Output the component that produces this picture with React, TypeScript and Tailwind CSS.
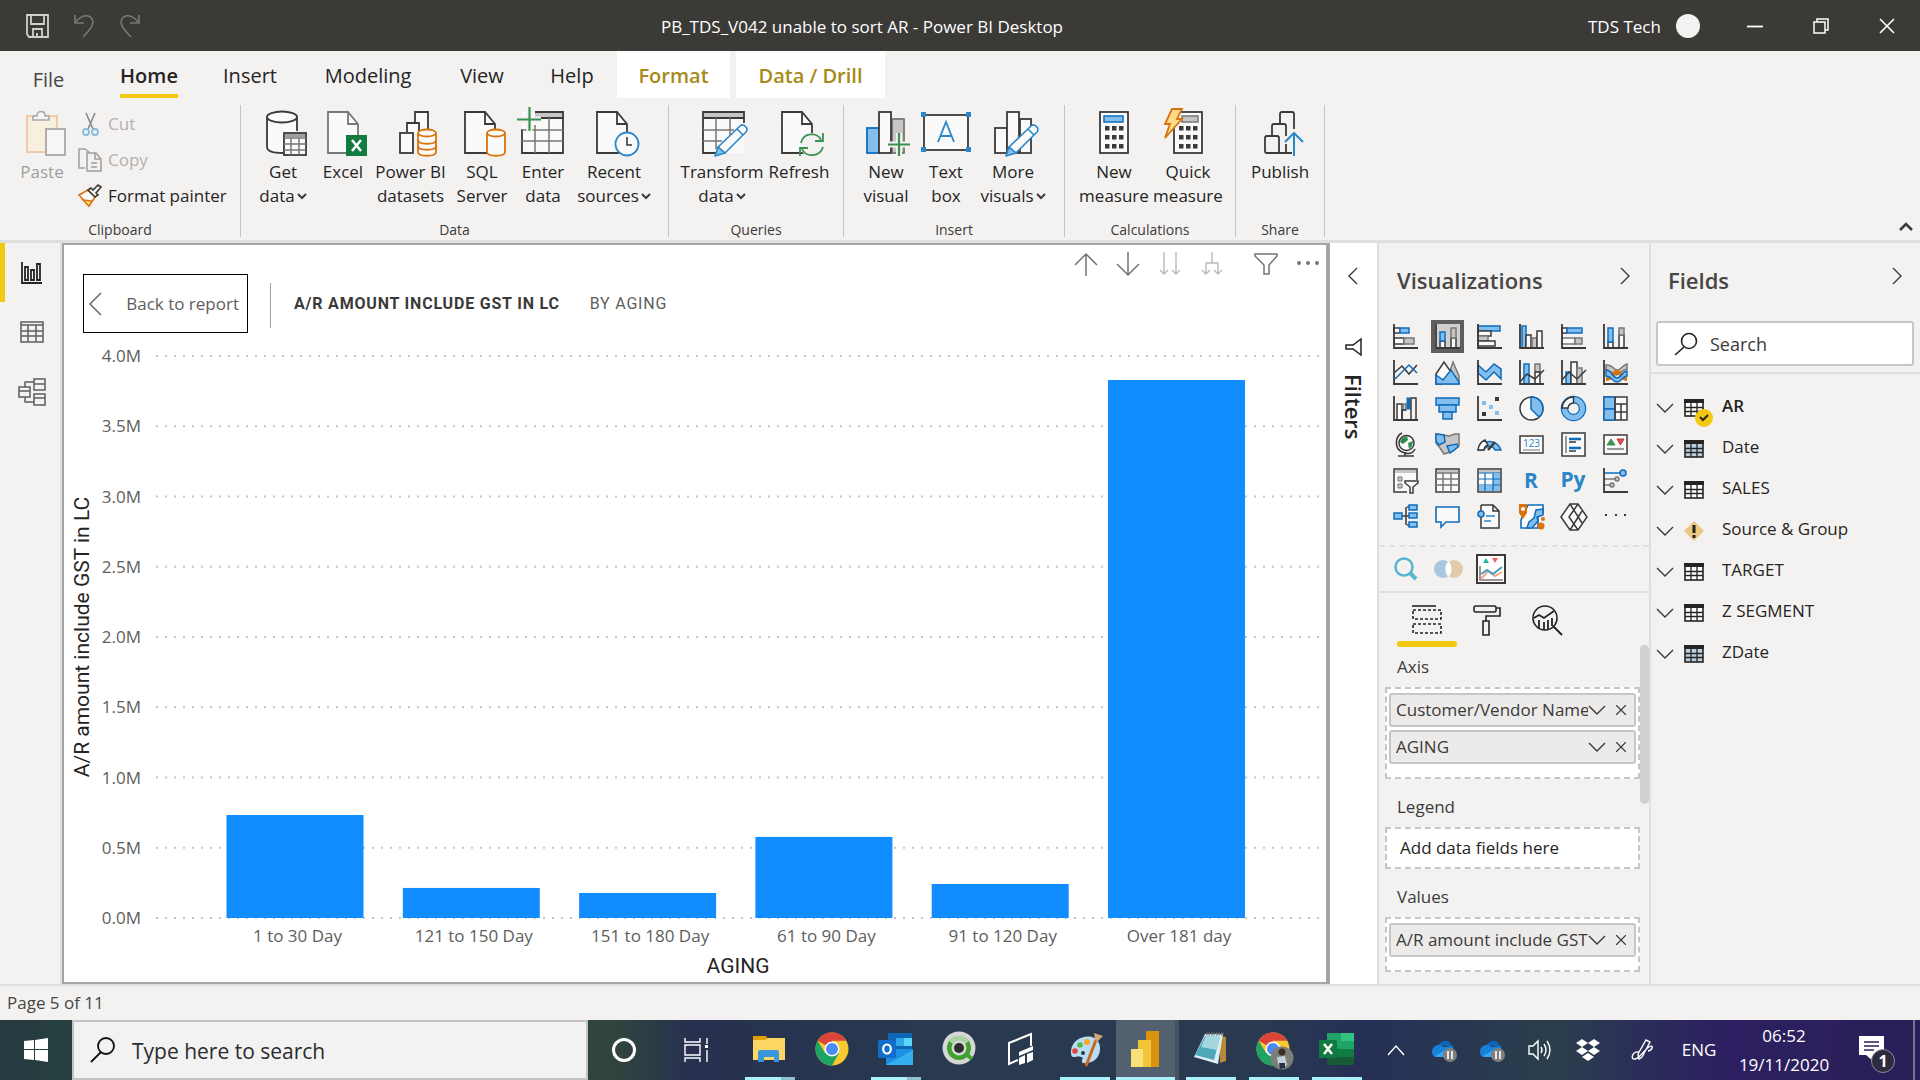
import { ReactNode, useState } from 'react';
import { X } from 'lucide-react';

const D = '#3b3a39';
const B = '#0f6cbd';
const LB = '#83beec';
const G = '#c8c6c4';
const GS = '#797775';
const W = '#fafafa';
const O = '#d9730d';

const tabs = [
  { label: 'File', box: 'w-[97px] text-[#484644]', text: 'pt-2.5' },
  { label: 'Home', box: 'w-[104px]', text: 'pt-1.5' },
  { label: 'Insert', box: 'w-[98px]', text: 'pt-1.5' },
  { label: 'Modeling', box: 'w-[138px]', text: 'pt-1.5' },
  { label: 'View', box: 'w-[90px]', text: 'pt-1.5' },
  { label: 'Help', box: 'w-[90px]', text: 'pt-1.5' },
];

const bars = [
  { label: '1 to 30 Day', value: 0.733 },
  { label: '121 to 150 Day', value: 0.214 },
  { label: '151 to 180 Day', value: 0.178 },
  { label: '61 to 90 Day', value: 0.577 },
  { label: '91 to 120 Day', value: 0.242 },
  { label: 'Over 181 day', value: 3.829 },
];

const ticks = ['4.0M', '3.5M', '3.0M', '2.5M', '2.0M', '1.5M', '1.0M', '0.5M', '0.0M'];

const fields = [
  { name: 'AR', kind: 'checked' },
  { name: 'Date', kind: 'date' },
  { name: 'SALES', kind: 'table' },
  { name: 'Source & Group', kind: 'warning' },
  { name: 'TARGET', kind: 'table' },
  { name: 'Z SEGMENT', kind: 'table' },
  { name: 'ZDate', kind: 'date' },
];

function Svg({ w, h, children }: { w: number; h: number; children: ReactNode }) {
  return (
    <svg width={w} height={h} viewBox={`0 0 ${w} ${h}`} fill="none" className="shrink-0 overflow-visible" aria-hidden="true">
      {children}
    </svg>
  );
}

function Chevron({ dir, w = 18, h = 10, color = D }: { dir: 'up' | 'down' | 'left' | 'right'; w?: number; h?: number; color?: string }) {
  const d = {
    up: `M1 ${h - 1}L${w / 2} 1L${w - 1} ${h - 1}`,
    down: `M1 1L${w / 2} ${h - 1}L${w - 1} 1`,
    left: `M${w - 1} 1L1 ${h / 2}L${w - 1} ${h - 1}`,
    right: `M1 1L${w - 1} ${h / 2}L1 ${h - 1}`,
  }[dir];
  return (
    <Svg w={w} h={h}>
      <path d={d} stroke={color} strokeWidth="1.4" />
    </Svg>
  );
}

/* ---------- Ribbon drawings, 48 x 48 ---------- */

const Page = ({ x = 7, color = D }: { x?: number; color?: string }) => (
  <path d={`M${x + 30} 26V15L${x + 20} 3H${x}V44H${x + 22}M${x + 20} 3V15H${x + 30}`} stroke={color} strokeWidth="1.8" fill={W} />
);

const Cylinder = ({ x, rings }: { x: number; rings?: boolean }) => (
  <g stroke={O} strokeWidth="1.8" fill={W}>
    <path d={`M${x} 24V43C${x} 48 ${x + 18} 48 ${x + 18} 43V24`} />
    <ellipse cx={x + 9} cy="24" rx="9" ry="3.5" />
    {rings && <path d={`M${x} 31C${x} 36 ${x + 18} 36 ${x + 18} 31M${x} 37C${x} 42 ${x + 18} 42 ${x + 18} 37`} fill="none" />}
  </g>
);

const Pencil = () => (
  <g stroke="#2a87c8" strokeWidth="1.6" strokeLinejoin="round">
    <path d="M20 38L42 17C45 14 51 19 48 23L27 44Z" fill={W} />
    <path d="M20 38L17 47L27 44Z" fill={LB} />
    <path d="M39 20L45 26" />
  </g>
);

const Calc = ({ x }: { x: number }) => (
  <g>
    <rect x={x} y="3" width="28" height="41" fill={W} stroke={D} strokeWidth="1.8" />
    {[17, 26, 35].map((y) =>
      [5, 12, 19].map((dx) => <rect key={`${y}-${dx}`} x={x + dx} y={y} width="4.5" height="4.5" fill={D} />)
    )}
  </g>
);

const ribbonIcons: Record<string, ReactNode> = {
  paste: (
    <g opacity="0.6">
      <rect x="9" y="7" width="30" height="36" fill="#fcefd2" stroke="#f0b27a" strokeWidth="2" />
      <path d="M15 11V7H19C19 1 27 1 27 7H31V11Z" fill={W} stroke={GS} strokeWidth="1.6" />
      <rect x="28" y="20" width="19" height="26" fill={W} stroke={GS} strokeWidth="1.8" />
    </g>
  ),
  getData: (
    <>
      <path d="M8 8V38C8 42 15 44 24 44V24H38V8Z" fill={W} />
      <path d="M8 8V38C8 42 15 44 24 44M38 8V22" stroke={D} strokeWidth="1.8" />
      <ellipse cx="23" cy="8" rx="15" ry="5.5" fill={W} stroke={D} strokeWidth="1.8" />
      <rect x="25" y="24" width="22" height="22" fill={W} stroke={D} strokeWidth="1.8" />
      <path d="M26 25H46V28H26Z" fill="#a19f9d" />
      <path d="M25 29H47M25 35H47M25 41H47M32 29V46M40 29V46" stroke={GS} strokeWidth="1.5" />
    </>
  ),
  excel: (
    <>
      <Page x={9} color={GS} />
      <rect x="27" y="26" width="21" height="21" fill="#107c41" />
      <path d="M33 31L42 42M42 31L33 42" stroke="#fff" strokeWidth="2.5" />
    </>
  ),
  pbi: (
    <>
      <g stroke={D} strokeWidth="1.8" fill={W}>
        <path d="M28 14V3H41V20" />
        <path d="M20 23V14H32V24" />
        <rect x="13" y="24" width="13" height="20" />
      </g>
      <Cylinder x={31} rings />
    </>
  ),
  sql: (
    <>
      <Page />
      <Cylinder x={29} />
    </>
  ),
  enter: (
    <>
      <rect x="3" y="3" width="41" height="41" fill={W} />
      <path d="M16 3H44V8H16Z" fill={G} />
      <path d="M3 20V44H44V3H16M22 9H44" stroke={D} strokeWidth="1.8" />
      <path d="M3 21H44M3 32H44M16 16V44M30 9V44" stroke={GS} strokeWidth="1.5" />
      <path d="M-2 10.5H22M10.5 -2V22" stroke="#f3f2f1" strokeWidth="6" />
      <path d="M-2 10.5H22M10.5 -2V22" stroke="#3a9150" strokeWidth="2.2" />
    </>
  ),
  recent: (
    <>
      <Page />
      <circle cx="37" cy="35" r="11.5" fill={W} stroke="#2a87c8" strokeWidth="1.8" />
      <path d="M37 28V36H42" stroke={D} strokeWidth="1.6" />
    </>
  ),
  transform: (
    <>
      <rect x="5" y="3" width="41" height="41" fill={W} />
      <path d="M5 3H46V9H5Z" fill={G} />
      <path d="M46 14V3H5V44H18M5 9H46" stroke={D} strokeWidth="1.8" />
      <path d="M5 21H36M5 32H24M18 9V40M32 9V26" stroke={GS} strokeWidth="1.5" />
      <Pencil />
    </>
  ),
  refresh: (
    <>
      <Page />
      <circle cx="37" cy="36" r="12" fill="#f3f2f1" />
      <path d="M26 34C28 23 43 23 46 31M48 24V32H40M48 38C45 48 31 49 27 40M25 47V39H33" stroke="#3a9150" strokeWidth="1.8" />
    </>
  ),
  newVisual: (
    <>
      <rect x="30" y="10" width="12" height="34" fill={G} stroke={GS} strokeWidth="1.8" />
      <rect x="5" y="19" width="12" height="25" fill={LB} stroke={B} strokeWidth="1.8" />
      <rect x="17" y="3" width="12" height="41" fill={W} stroke={D} strokeWidth="1.8" />
      <path d="M26 35.5H48M37 24V47" stroke="#f3f2f1" strokeWidth="6" />
      <path d="M26 35.5H48M37 24V47" stroke="#3a9150" strokeWidth="2.2" />
    </>
  ),
  textBox: (
    <>
      <rect x="2" y="6" width="44" height="35" fill={W} stroke={D} strokeWidth="1.8" />
      <path d="M-1 3h5v5h-5zM44 3h5v5h-5zM-1 38h5v5h-5zM44 38h5v5h-5z" fill="#2a87c8" />
      <path d="M16 33L24 13L32 33M19 27H29" stroke="#2a87c8" strokeWidth="1.8" />
    </>
  ),
  moreVisuals: (
    <>
      <g stroke={D} strokeWidth="1.8" fill={W}>
        <rect x="6" y="19" width="12" height="25" />
        <rect x="31" y="10" width="11" height="34" />
        <rect x="18" y="3" width="12" height="41" />
      </g>
      <Pencil />
    </>
  ),
  newMeasure: (
    <>
      <Calc x={10} />
      <rect x="14" y="7" width="19" height="6" fill={LB} stroke={B} strokeWidth="1.5" />
    </>
  ),
  quickMeasure: (
    <>
      <Calc x={10} />
      <rect x="18" y="7" width="16" height="6" fill={G} stroke={GS} strokeWidth="1.5" />
      <path d="M8 0H18L13 10H18L1 29L6 15H1Z" fill="#fdd98b" stroke={O} strokeWidth="1.8" />
    </>
  ),
  publish: (
    <>
      <g stroke={D} strokeWidth="1.8">
        <path d="M24 14V5Q24 3 26 3H36Q38 3 38 5V20" />
        <path d="M16 26V17Q16 15 18 15H28Q30 15 30 17V27M30 35V43" />
        <path d="M36 44H11Q9 44 9 42V29Q9 27 11 27H21Q23 27 23 29V44" />
      </g>
      <path d="M38 47V25M29 33L38 24L47 33" stroke="#2a87c8" strokeWidth="2" />
    </>
  ),
};

function RibbonButton({ icon, lines, box, menu, muted }: { icon: string; lines: string[]; box: string; menu?: boolean; muted?: boolean }) {
  return (
    <button className={`flex shrink-0 flex-col items-center whitespace-nowrap pt-1 text-[17px] leading-6 ${muted ? 'text-[#a19f9d]' : 'text-[#252423]'} ${box}`}>
      <Svg w={48} h={48}>{ribbonIcons[icon]}</Svg>
      <span className="pt-[3px]">{lines[0]}</span>
      {lines[1] && (
        <span className="flex items-center gap-0.5">
          {lines[1]}
          {menu && (
            <Svg w={10} h={6}>
              <path d="M1 1L5 5L9 1" stroke={D} strokeWidth="2" />
            </Svg>
          )}
        </span>
      )}
    </button>
  );
}

function RibbonGroup({ label, box, children }: { label: string; box: string; children: ReactNode }) {
  return (
    <section className={`flex h-[132px] shrink-0 flex-col justify-between border-r border-[#c8c6c4] ${box}`}>
      <div className="flex">{children}</div>
      <p className="text-center text-[14px] leading-[14px] text-[#3b3a39]">{label}</p>
    </section>
  );
}

/* ---------- Visual type gallery, 25 x 25 ---------- */

const Axes = () => <path d="M1 0V24H25" stroke={D} strokeWidth="1.8" />;
const blue = { fill: LB, stroke: B, strokeWidth: 1.5 };
const gray = { fill: G, stroke: GS, strokeWidth: 1.5 };
const dark = { fill: W, stroke: D, strokeWidth: 1.5 };

const visuals: { name: string; art: ReactNode }[] = [
  { name: 'Stacked bar chart', art: <><rect x="1" y="4" width="6" height="5" {...dark} /><rect x="7" y="4" width="9" height="5" {...blue} /><rect x="1" y="14" width="10" height="6" {...dark} /><rect x="11" y="14" width="10" height="6" {...gray} /><Axes /></> },
  { name: 'Stacked column chart', art: <><rect x="5" y="17" width="5" height="7" {...dark} /><rect x="5" y="8" width="5" height="9" {...blue} /><rect x="16" y="14" width="5" height="10" {...dark} /><rect x="16" y="4" width="5" height="10" {...gray} /><Axes /></> },
  { name: 'Clustered bar chart', art: <><rect x="1" y="2" width="22" height="5" {...blue} /><rect x="1" y="7" width="13" height="5" {...dark} /><rect x="1" y="12" width="10" height="5" {...gray} /><rect x="1" y="17" width="17" height="5" {...dark} /><Axes /></> },
  { name: 'Clustered column chart', art: <><rect x="3" y="2" width="4" height="22" {...blue} /><rect x="7" y="11" width="5" height="13" {...dark} /><rect x="13" y="14" width="5" height="10" {...gray} /><rect x="18" y="7" width="5" height="17" {...dark} /><Axes /></> },
  { name: '100% stacked bar chart', art: <><rect x="1" y="4" width="5" height="5" {...dark} /><rect x="6" y="4" width="15" height="5" {...blue} /><rect x="1" y="14" width="13" height="6" fill={W} stroke={GS} strokeWidth="1.5" /><rect x="14" y="14" width="7" height="6" {...gray} /><Axes /></> },
  { name: '100% stacked column chart', art: <><rect x="5" y="18" width="5" height="6" {...dark} /><rect x="5" y="4" width="5" height="14" {...blue} /><rect x="16" y="11" width="5" height="13" {...dark} /><rect x="16" y="4" width="5" height="7" {...gray} /><Axes /></> },
  { name: 'Line chart', art: <><path d="M1 13L9 6L16 14L24 5" stroke={D} strokeWidth="1.5" /><path d="M2 19L16 5L24 13" stroke={B} strokeWidth="1.5" /><Axes /></> },
  { name: 'Area chart', art: <><path d="M11 23L18 2L24 16V24H11Z" {...gray} /><path d="M1 14L9 2L16 12L8 24H1Z" {...dark} /><path d="M1 24V15L8 20L16 10L24 22V24Z" {...blue} /></> },
  { name: 'Stacked area chart', art: <><path d="M1 5L9 12L17 4L24 9V19L17 12L9 20L1 13Z" {...blue} /><Axes /></> },
  { name: 'Line and stacked column chart', art: <><rect x="5" y="4" width="5" height="20" {...blue} /><rect x="16" y="4" width="5" height="8" {...gray} /><rect x="16" y="12" width="5" height="12" {...dark} /><path d="M1 22L8 14L16 19L25 10" stroke={D} strokeWidth="1.5" /><Axes /></> },
  { name: 'Line and clustered column chart', art: <><rect x="5" y="12" width="5" height="12" {...blue} /><rect x="10" y="2" width="6" height="22" {...dark} /><rect x="16" y="8" width="5" height="16" {...gray} /><path d="M1 20L8 12L16 19L25 10" stroke={D} strokeWidth="1.5" /><Axes /></> },
  { name: 'Ribbon chart', art: <><path d="M3 5C10 4 10 10 14 10S20 5 24 4V9C18 10 18 15 13 15S8 9 3 10Z" {...gray} /><path d="M3 19C9 19 9 12 14 12S19 19 24 19" stroke={O} strokeWidth="4" /><path d="M3 10C9 10 9 18 14 18S19 11 24 11V16C19 16 19 22 14 22S9 16 3 16Z" {...blue} /><Axes /></> },
  { name: 'Waterfall chart', art: <><rect x="4" y="8" width="5" height="16" {...dark} /><rect x="10" y="8" width="3" height="6" {...gray} /><rect x="14" y="2" width="3" height="11" fill={B} stroke={B} /><path d="M9 24V14H13M18 24V2H23V24" stroke={D} strokeWidth="1.5" /><Axes /></> },
  { name: 'Funnel chart', art: <><rect x="1" y="2" width="23" height="7" {...blue} /><rect x="4" y="9" width="17" height="7" {...blue} /><rect x="8" y="16" width="9" height="7" {...blue} /></> },
  { name: 'Scatter chart', art: <><path d="M5 5h4v4h-4zM12 9h4v4h-4zM18 15h4v4h-4z" fill={LB} /><path d="M18 1h4v4h-4zM5 16h4v4h-4z" fill={D} /><Axes /></> },
  { name: 'Pie chart', art: <><circle cx="12.5" cy="12.5" r="11.5" {...dark} /><path d="M12 1V13L20 21A11.5 11.5 0 0 0 12 1Z" {...blue} /></> },
  { name: 'Donut chart', art: <><circle cx="12.5" cy="12.5" r="9" stroke={B} strokeWidth="7.5" /><circle cx="12.5" cy="12.5" r="9" stroke={LB} strokeWidth="5" /><path d="M12.5 1A11.5 11.5 0 0 0 1 12H7A6 6 0 0 1 12.5 7Z" fill={W} stroke={D} strokeWidth="1.5" /></> },
  { name: 'Treemap', art: <><rect x="1" y="1" width="23" height="23" {...dark} /><rect x="1" y="1" width="11" height="12" {...blue} /><rect x="1" y="13" width="11" height="11" {...blue} /><path d="M12 1V24M12 8H24M12 16H24M18 8V24" stroke={D} strokeWidth="1.5" /></> },
  { name: 'Map', art: <><circle cx="13.5" cy="11" r="7.5" {...dark} /><path d="M9 6L14 4L15 8L10 12L7 10ZM15 11L20 9L19 14L16 17Z" fill="#2e8b4f" /><path d="M9 1C1 5 2 17 9 20S20 21 22 17M12 20V24M5 24H21" stroke={D} strokeWidth="1.6" /></> },
  { name: 'Filled map', art: <><path d="M1 2L8 3L14 4L20 2H24V14L18 19L12 21L9 22L5 16L1 11Z" {...gray} /><path d="M1 2L9 3L10 10L4 13L1 9ZM12 14L22 12L23 15L15 21Z" {...blue} /></> },
  { name: 'Gauge', art: <><path d="M1 18A12 12 0 0 1 24 18H18A6 6 0 0 0 7 18Z" {...blue} /><path d="M1 18A12 12 0 0 1 8 8L11 13A6 6 0 0 0 7 18Z" {...dark} /><path d="M11 18L18 10" stroke={D} strokeWidth="2.5" /></> },
  { name: 'Card', art: <><rect x="1" y="4" width="23" height="17" {...dark} /><text x="12.5" y="15" textAnchor="middle" fontSize="10" fill="#2a87c8">123</text><path d="M4 18H21" stroke={GS} /></> },
  { name: 'Multi-row card', art: <><rect x="1" y="1" width="23" height="23" {...dark} /><path d="M5 4V21" stroke={GS} strokeWidth="1.5" /><path d="M8 7H20M8 16H20" stroke={B} strokeWidth="2.5" /><path d="M8 10H15M8 19H15" stroke={D} strokeWidth="1.5" /></> },
  { name: 'KPI', art: <><rect x="1" y="3" width="23" height="19" {...dark} /><path d="M4 13L8 7L12 13Z" fill="#3a9150" stroke="#3a9150" /><path d="M14 7H21L17.5 13Z" fill="#e05252" stroke="#c43131" /><path d="M4 17H21" stroke={GS} strokeWidth="1.5" /></> },
  { name: 'Slicer', art: <><path d="M14 24H1V1H24V12" {...dark} /><path d="M2 2H23V5H2Z" fill={G} /><path d="M5 9h4v4H5zM5 16h4v4H5z" fill={G} stroke={GS} /><path d="M12 13H25V15L20 19V25H17V19L12 15Z" {...dark} /></> },
  { name: 'Table', art: <><rect x="1" y="1" width="23" height="23" {...dark} /><path d="M2 2H23V5H2Z" fill={G} /><path d="M1 5H24M1 11H24M1 17H24M8 5V24M16 5V24" stroke={GS} strokeWidth="1.5" /></> },
  { name: 'Matrix', art: <><rect x="1" y="1" width="23" height="23" {...dark} /><path d="M2 2H23V5H2Z" fill={G} /><path d="M16 6H23V23H2V18H16Z" fill={LB} /><path d="M1 5H24M1 11H24M1 17H24M8 5V24M16 5V24" stroke={B} strokeWidth="1.2" /></> },
  { name: 'R script visual', art: <text x="12" y="20" textAnchor="middle" fontSize="21" fontWeight="700" fill="#2a87c8">R</text> },
  { name: 'Python visual', art: <text x="12" y="19" textAnchor="middle" fontSize="21" fontWeight="700" fill="#2a87c8">Py</text> },
  { name: 'Key influencers', art: <><path d="M1 5H17" stroke={B} strokeWidth="1.5" /><circle cx="20" cy="5" r="3" {...blue} /><path d="M1 11H13M1 17H7" stroke={GS} strokeWidth="1.5" /><circle cx="14" cy="11" r="2" {...gray} /><circle cx="9" cy="17" r="2" {...gray} /><Axes /></> },
  { name: 'Decomposition tree', art: <><path d="M9 12H24M14 3H19M14 21H19M13 3V21" stroke={D} strokeWidth="1.5" /><rect x="1" y="9" width="8" height="6" {...blue} /><rect x="16" y="1" width="8" height="5" {...blue} /><rect x="16" y="9" width="8" height="5" {...blue} /><rect x="16" y="18" width="8" height="5" {...blue} /></> },
  { name: 'Q&A', art: <path d="M1 3H24V18H11L6 23V18H1Z" fill={W} stroke={B} strokeWidth="1.6" /> },
  { name: 'Smart narrative', art: <><path d="M4 1H16L22 7V24H4V1M16 1V7H22" {...dark} /><path d="M9 12H18M7 17H14" stroke="#2a87c8" strokeWidth="1.5" /><circle cx="4" cy="10" r="3" {...blue} /></> },
  { name: 'ArcGIS map', art: <><path d="M9 1H24V9L19 13V24H2V16Z" fill={W} stroke={B} strokeWidth="1.6" /><path d="M17 6L24 5V11L18 13L19 17L13 24H8L10 18L15 14Z" {...blue} /><path d="M0 0H8V9L4 15L0 9Z" fill={O} /><circle cx="4" cy="5" r="2" fill="#fff" /><circle cx="22" cy="22" r="3.5" fill={O} /><circle cx="24" cy="15" r="2" fill={O} /></> },
  { name: 'Power Apps', art: <g {...dark}><path d="M9 0L0 13L9 26H17L26 13L17 0Z" /><path d="M17 0L8 13L17 26M9 0L21 19M9 26L21 7" fill="none" /></g> },
  { name: 'Get more visuals', art: <path d="M2 10h2v2H2zM12 10h2v2h-2zM21 10h2v2h-2z" fill={D} /> },
];

/* ---------- Header and ribbon ---------- */

function TitleBar() {
  return (
    <header className="flex h-[51px] items-center bg-[#3b3a37] text-[17px] text-white">
      <div className="flex w-[144px] items-center gap-[22px] pl-6">
        <button aria-label="Save">
          <Svg w={26} h={24}>
            <path d="M3 1H24V23H5L3 20Z" stroke="#d2d0ce" strokeWidth="1.8" />
            <path d="M7 1V10H20V1M9 23V15H18V23M13 19V23" stroke="#d2d0ce" strokeWidth="1.8" />
          </Svg>
        </button>
        <button aria-label="Undo">
          <Svg w={24} h={24}>
            <path d="M3 1V9H12M3 9C11 -2 20 1 21 8C21 12 17 17 11 23" stroke="#7a7875" strokeWidth="1.6" />
          </Svg>
        </button>
        <button aria-label="Redo">
          <Svg w={24} h={24}>
            <path d="M21 1V9H12M21 9C13 -2 4 1 3 8C3 12 7 17 13 23" stroke="#7a7875" strokeWidth="1.6" />
          </Svg>
        </button>
      </div>
      <h1 className="flex-1 pt-0.5 text-center">PB_TDS_V042 unable to sort AR - Power BI Desktop</h1>
      <div className="flex w-[340px] items-center">
        <span className="w-[96px] whitespace-nowrap pl-2 pt-0.5">TDS Tech</span>
        <span className="h-6 w-6 rounded-full bg-[#f3f2f1]" />
        <div className="ml-auto flex">
          <button aria-label="Minimize" className="flex w-[66px] justify-center">
            <Svg w={16} h={16}><path d="M0 8.5H16" stroke="#fff" strokeWidth="1.8" /></Svg>
          </button>
          <button aria-label="Restore" className="flex w-[66px] justify-center">
            <Svg w={16} h={16}><path d="M1 4H12V15H1ZM4 4V1H15V12H12" stroke="#fff" strokeWidth="1.5" /></Svg>
          </button>
          <button aria-label="Close" className="flex w-[66px] justify-center">
            <Svg w={16} h={16}><path d="M1 1L15 15M15 1L1 15" stroke="#fff" strokeWidth="1.6" /></Svg>
          </button>
        </div>
      </div>
    </header>
  );
}

function Ribbon() {
  const [active, setActive] = useState('Home');

  return (
    <div className="border-b-[3px] border-[#e1dfdd] pb-[3px]">
      <nav className="flex h-[54px] items-start text-[20px] leading-6 text-[#252423]">
        {tabs.map((tab) => (
          <button key={tab.label} onClick={() => setActive(tab.label)} className={`flex h-[47px] shrink-0 items-end justify-center ${tab.box}`}>
            <span className={`flex h-10 items-start ${tab.text} ${active === tab.label ? 'border-b-4 border-[#f2c811] font-semibold' : ''}`}>{tab.label}</span>
          </button>
        ))}
        <button className="mr-1.5 h-[47px] w-[113px] bg-white pt-0.5 font-semibold text-[#a68a15]">Format</button>
        <button className="h-[47px] w-[149px] bg-white pt-0.5 font-semibold text-[#a68a15]">Data / Drill</button>
      </nav>

      <div className="flex items-end">
        <RibbonGroup label="Clipboard" box="w-[241px]">
          <RibbonButton icon="paste" lines={['Paste']} box="ml-3 w-[60px]" muted />
          <div className="flex flex-col gap-3 pl-1.5 pt-[7px] text-[17px] leading-6">
            <button className="flex items-center gap-1.5 text-[#b3b0ad]">
              <Svg w={24} h={24}>
                <path d="M8 1L15 17M17 1L10 17" stroke="#8a8886" strokeWidth="1.6" />
                <circle cx="8" cy="20" r="3" stroke="#8bbbdc" strokeWidth="1.8" />
                <circle cx="17" cy="20" r="3" stroke="#8bbbdc" strokeWidth="1.8" />
              </Svg>
              Cut
            </button>
            <button className="flex items-center gap-1.5 text-[#b3b0ad]">
              <Svg w={24} h={24}>
                <path d="M7 20H1V1H7L12 5M9 5H18L23 11V23H9ZM17 5V11H23M13 15H19M13 19H19" stroke="#a19f9d" strokeWidth="1.5" />
              </Svg>
              Copy
            </button>
            <button className="flex items-center gap-1.5 whitespace-nowrap text-[#252423]">
              <Svg w={24} h={24}>
                <path d="M1 11L10 6L17 13L11 22Z" fill={W} stroke={O} strokeWidth="1.6" />
                <path d="M5 16L14 17L11 22Z" fill="#fdd98b" stroke={O} strokeWidth="1.4" />
                <path d="M10 6L13 4L15 6L20 1L23 3L18 9L20 11L17 13Z" fill={W} stroke={D} strokeWidth="1.6" />
              </Svg>
              Format painter
            </button>
          </div>
        </RibbonGroup>

        <RibbonGroup label="Data" box="w-[428px]">
          <RibbonButton icon="getData" lines={['Get', 'data']} menu box="ml-3 w-[60px]" />
          <RibbonButton icon="excel" lines={['Excel']} box="w-[60px]" />
          <RibbonButton icon="pbi" lines={['Power BI', 'datasets']} box="w-[75px]" />
          <RibbonButton icon="sql" lines={['SQL', 'Server']} box="w-[68px]" />
          <RibbonButton icon="enter" lines={['Enter', 'data']} box="w-[54px]" />
          <RibbonButton icon="recent" lines={['Recent', 'sources']} menu box="w-[88px]" />
        </RibbonGroup>

        <RibbonGroup label="Queries" box="w-[175px]">
          <RibbonButton icon="transform" lines={['Transform', 'data']} menu box="ml-3 w-[82px]" />
          <RibbonButton icon="refresh" lines={['Refresh']} box="w-[72px]" />
        </RibbonGroup>

        <RibbonGroup label="Insert" box="w-[221px]">
          <RibbonButton icon="newVisual" lines={['New', 'visual']} box="ml-3 w-[60px]" />
          <RibbonButton icon="textBox" lines={['Text', 'box']} box="w-[60px]" />
          <RibbonButton icon="moreVisuals" lines={['More', 'visuals']} menu box="w-[74px]" />
        </RibbonGroup>

        <RibbonGroup label="Calculations" box="w-[171px]">
          <RibbonButton icon="newMeasure" lines={['New', 'measure']} box="ml-3 w-[74px]" />
          <RibbonButton icon="quickMeasure" lines={['Quick', 'measure']} box="w-[74px]" />
        </RibbonGroup>

        <RibbonGroup label="Share" box="w-[89px]">
          <RibbonButton icon="publish" lines={['Publish']} box="w-[88px]" />
        </RibbonGroup>

        <button aria-label="Collapse ribbon" className="mb-1.5 ml-auto mr-[7px]">
          <Svg w={14} h={9}><path d="M1 8L7 2L13 8" stroke={D} strokeWidth="2.6" /></Svg>
        </button>
      </div>
    </div>
  );
}

/* ---------- Report canvas ---------- */

function ViewRail() {
  return (
    <nav className="flex w-[62px] shrink-0 flex-col border-r-2 border-[#e1dfdd]">
      <button aria-label="Report" className="flex h-[59px] items-center border-l-[5px] border-[#f2c811] pl-4">
        <Svg w={22} h={22}>
          <path d="M1 0V21H21M4 18V5H7V18ZM10 18V8H13V18ZM16 18V2H19V18Z" stroke="#252423" strokeWidth="1.8" />
        </Svg>
      </button>
      <button aria-label="Data" className="flex h-[60px] items-center justify-center pl-1">
        <Svg w={24} h={22}>
          <path d="M1 1H23V21H1ZM1 4H23M1 10H23M1 15H23M8 4V21M16 4V21" stroke="#605e5c" strokeWidth="1.5" />
        </Svg>
      </button>
      <button aria-label="Model" className="flex h-[60px] items-center justify-center pl-1">
        <Svg w={28} h={28}>
          <path d="M16 1H27V12H16ZM16 6H27M16 16H27V27H16ZM16 20H27M1 9H12V19H1ZM1 13H12M7 9V4H16M7 19V24H16" stroke="#605e5c" strokeWidth="1.5" />
        </Svg>
      </button>
    </nav>
  );
}

function VisualToolbar() {
  return (
    <div className="flex h-[31px] items-end justify-end gap-[18px] pr-1.5">
      <button aria-label="Drill up"><Svg w={24} h={24}><path d="M12 24V2M1 13L12 2L23 13" stroke="#767471" strokeWidth="1.5" /></Svg></button>
      <button aria-label="Drill down"><Svg w={24} h={24}><path d="M12 0V22M1 12L12 23L23 12" stroke="#767471" strokeWidth="1.5" /></Svg></button>
      <button aria-label="Go to the next level"><Svg w={24} h={24}><path d="M6 0V22M2 18L6 22L10 18M18 0V22M14 18L18 22L22 18" stroke="#b9b9c4" strokeWidth="1.4" /></Svg></button>
      <button aria-label="Expand down one level"><Svg w={24} h={24}><path d="M12 0V11M6 22V11H18V22M2 18L6 22L10 18M14 18L18 22L22 18" stroke="#b9b9c4" strokeWidth="1.4" /></Svg></button>
      <button aria-label="Filters" className="ml-3"><Svg w={24} h={24}><path d="M1 2H23V4L15 13V22H10V13L1 4Z" stroke="#767471" strokeWidth="1.5" /></Svg></button>
      <button aria-label="More options"><Svg w={24} h={24}><circle cx="3" cy="11" r="2" fill="#767471" /><circle cx="12" cy="11" r="2" fill="#767471" /><circle cx="21" cy="11" r="2" fill="#767471" /></Svg></button>
    </div>
  );
}

function Chart() {
  const base = 585;
  const step = 70.25;

  return (
    <svg viewBox="0 0 1262 649" className="min-h-0 w-full flex-1" role="img" aria-label="A/R amount include GST in LC by AGING">
      {ticks.map((tick, i) => (
        <g key={tick}>
          <text x="77" y={29 + i * step} textAnchor="end" fontSize="17" fill="#605e5c">{tick}</text>
          <path d={`M92 ${23 + i * step}H1257`} stroke="#c8c6c4" strokeWidth="2" strokeDasharray="2 7" />
        </g>
      ))}
      {bars.map((bar, i) => {
        const h = (bar.value / 4) * 562;
        const x = 162.5 + i * 176.3;
        return (
          <g key={bar.label}>
            <rect x={x} y={base - h} width="137" height={h} fill="#118dff" />
            <text x={x + 71} y="609" textAnchor="middle" fontSize="17" fill="#605e5c">{bar.label}</text>
          </g>
        );
      })}
      <text x="674" y="640" textAnchor="middle" fontSize="21" fill="#252423" className="font-['Roboto',sans-serif]">AGING</text>
      <text transform="translate(25 304) rotate(-90)" textAnchor="middle" fontSize="21" fill="#252423" className="font-['Roboto',sans-serif]">
        A/R amount include GST in LC
      </text>
    </svg>
  );
}

function Report() {
  return (
    <main className="flex min-w-0 flex-1 flex-col border-2 border-r-4 border-[#a6a5a3] bg-white">
      <VisualToolbar />
      <div className="-mt-0.5 flex items-center pl-[19px]">
        <button className="flex h-[59px] w-[165px] items-center justify-between border border-black pl-[5px] pr-2 text-[17px] text-[#605e5c]">
          <Chevron dir="left" w={13} h={24} color="#605e5c" />
          Back to report
        </button>
        <span className="ml-[22px] mt-1 h-[45px] w-px bg-[#a19f9d]" />
        <h2 className="ml-[23px] flex gap-[30px] font-['Roboto',sans-serif] text-[16px] leading-5 tracking-wider text-[#605e5c]">
          <span className="font-bold text-[#3b3a39]">A/R AMOUNT INCLUDE GST IN LC</span>
          <span>BY AGING</span>
        </h2>
      </div>
      <Chart />
    </main>
  );
}

/* ---------- Side panes ---------- */

function FiltersPane() {
  return (
    <aside className="flex w-[47px] shrink-0 flex-col items-center bg-white pt-6">
      <button aria-label="Expand filters" className="pr-0.5"><Chevron dir="left" w={10} h={18} /></button>
      <div className="flex flex-col items-center gap-[18px] pt-[53px]">
        <Svg w={16} h={18}><path d="M15 1V17L7 11H0V7H7Z" stroke="#252423" strokeWidth="1.5" /></Svg>
        <h2 className="text-[22px] font-semibold leading-6 text-[#252423] [writing-mode:vertical-rl]">Filters</h2>
      </div>
    </aside>
  );
}

function FieldChip({ name }: { name: string }) {
  return (
    <div className="flex h-[34px] items-center rounded-[3px] border-2 border-[#c8c6c4] bg-[#edebe9] pl-[5px] pr-1 text-[17px] text-[#3b3a39]">
      <span className="min-w-0 flex-1 overflow-hidden whitespace-nowrap">{name}</span>
      <button aria-label={`${name} options`}><Chevron dir="down" /></button>
      <button aria-label={`Remove ${name}`} className="pl-1.5"><X size={18} strokeWidth={1.5} /></button>
    </div>
  );
}

function Well({ label, names }: { label: string; names: string[] }) {
  return (
    <section>
      <h3 className="pb-2 pl-3 text-[17px] leading-6 text-[#3b3a39]">{label}</h3>
      {names.length > 0 ? (
        <div className="flex flex-col gap-[3px] border-2 border-dashed border-[#c8c6c4] bg-white px-0.5 pb-[13px] pt-1">
          {names.map((name) => <FieldChip key={name} name={name} />)}
        </div>
      ) : (
        <p className="border-2 border-dashed border-[#c8c6c4] bg-white py-[7px] pl-[13px] text-[17px] leading-6 text-[#252423]">Add data fields here</p>
      )}
    </section>
  );
}

function VisualizationsPane() {
  const [selected, setSelected] = useState('Stacked column chart');

  return (
    <aside className="w-[272px] shrink-0 border-l-2 border-[#e1dfdd]">
      <div className="flex h-[77px] items-start justify-between pl-[18px] pr-[19px] pt-6">
        <h2 className="text-[22px] font-semibold leading-[26px] text-[#484644]">Visualizations</h2>
        <button aria-label="Collapse visualizations"><Chevron dir="right" w={10} h={18} /></button>
      </div>

      <div className="grid grid-cols-[repeat(6,42px)] auto-rows-[36px] pl-[5px]">
        {visuals.map((v) => (
          <button
            key={v.name}
            title={v.name}
            onClick={() => setSelected(v.name)}
            className={`mx-auto flex h-[33px] w-[33px] items-center justify-center ${selected === v.name ? 'border-4 border-[#605e5c] bg-[#d2d0ce]' : ''}`}
          >
            <Svg w={25} h={25}>{v.art}</Svg>
          </button>
        ))}
      </div>

      <div className="mt-[9px] flex h-[48px] items-center gap-[13px] border-b-2 border-t-2 border-b-[#e1dfdd] border-t-[#e1dfdd] [border-top-style:dashed] pl-[14px]">
        <button aria-label="Search visual">
          <Svg w={28} h={24}><circle cx="11" cy="10" r="8.5" stroke="#56b5cf" strokeWidth="2.5" /><path d="M17 16L23 22" stroke="#56b5cf" strokeWidth="4" /></Svg>
        </button>
        <button aria-label="Venn diagram">
          <Svg w={29} h={20}><circle cx="9" cy="10" r="9" fill="#a9c8e0" /><circle cx="20" cy="10" r="9" fill="#e2c9a9" /><ellipse cx="14.5" cy="10" rx="3" ry="7" fill="#fff" /></Svg>
        </button>
        <button aria-label="Trend visual">
          <Svg w={30} h={30}>
            <rect x="1" y="1" width="28" height="28" fill="#fff" stroke={D} strokeWidth="2" />
            <path d="M4 12V26H27" stroke={GS} strokeWidth="1.5" />
            <path d="M5 25L12 17L19 22L26 18" stroke="#f4a582" strokeWidth="2" />
            <path d="M5 20L11 16L17 20L26 13" stroke="#4b9cc2" strokeWidth="2" />
            <path d="M7 9L10 4L13 9Z" fill="#1ab99b" /><path d="M16 4H22L19 9Z" fill="#f0606a" />
          </Svg>
        </button>
      </div>

      <div className="flex">
        <div className="min-w-0 flex-1 pl-1.5">
          <div className="flex h-[54px] pl-3">
            <button aria-label="Fields" className="flex w-[60px] flex-col items-center justify-between pt-3">
              <Svg w={30} h={30}>
                <path d="M0 1H24" stroke="#252423" strokeWidth="1.6" />
                <path d="M1 5H29V14H1ZM1 19H29V28H1Z" stroke="#252423" strokeWidth="1.6" strokeDasharray="3 2" />
              </Svg>
              <span className="h-1.5 w-full rounded-full bg-[#f2c811]" />
            </button>
            <button aria-label="Format" className="flex w-[60px] justify-center pt-3">
              <Svg w={28} h={31}>
                <rect x="1" y="1" width="22" height="6" rx="1.5" stroke="#252423" strokeWidth="1.6" />
                <path d="M23 3H27V11H13V16M10 16H16V30H10Z" stroke="#252423" strokeWidth="1.6" />
              </Svg>
            </button>
            <button aria-label="Analytics" className="flex w-[60px] justify-center pt-3">
              <Svg w={30} h={31}>
                <circle cx="13" cy="13" r="12" stroke="#252423" strokeWidth="1.6" />
                <path d="M21 21L30 30M2 13L7 10L12 13L22 6M7 15V23M12 17V25M16 15V25M20 13V21" stroke="#252423" strokeWidth="1.8" />
              </Svg>
            </button>
          </div>
          <div className="flex flex-col gap-4 pb-3 pt-2">
            <Well label="Axis" names={['Customer/Vendor Name', 'AGING']} />
            <Well label="Legend" names={[]} />
            <Well label="Values" names={['A/R amount include GST in LC']} />
          </div>
        </div>
        <div className="mt-[52px] h-[159px] w-[9px] rounded-full bg-[#d2d0ce]" />
      </div>
    </aside>
  );
}

function FieldIcon({ kind }: { kind: string }) {
  if (kind === 'warning') {
    return (
      <Svg w={20} h={20}>
        <path d="M10 0L20 10L10 20L0 10Z" fill="#eec882" />
        <path d="M10 4V12M10 14V17" stroke="#252423" strokeWidth="3" />
      </Svg>
    );
  }
  return (
    <Svg w={20} h={18}>
      <rect x="1" y="1" width="18" height="16" fill={kind === 'date' ? '#b9cfe0' : '#fff'} stroke="#252423" strokeWidth="1.6" />
      <path d="M0 0H20V4H0Z" fill="#252423" />
      <path d="M1 8.5H19M1 12.5H19M7 4V17M13 4V17" stroke="#252423" strokeWidth="1.3" />
      {kind === 'checked' && (
        <>
          <circle cx="20" cy="19" r="9" fill="#f2c811" />
          <path d="M16 18L19 21L24 16" stroke="#252423" strokeWidth="2" />
        </>
      )}
    </Svg>
  );
}

function FieldsPane() {
  return (
    <aside className="w-[271px] shrink-0 border-l-2 border-[#e1dfdd]">
      <div className="flex h-[78px] items-start justify-between pl-[17px] pr-[18px] pt-6">
        <h2 className="text-[22px] font-semibold leading-[26px] text-[#484644]">Fields</h2>
        <button aria-label="Collapse fields"><Chevron dir="right" w={10} h={18} /></button>
      </div>
      <div className="border-b-2 border-[#e1dfdd] pb-1.5 pl-[5px] pr-1.5">
        <label className="flex h-[45px] items-center gap-3 rounded-[3px] border-2 border-[#c8c6c4] bg-white pl-4">
          <Svg w={24} h={24}>
            <circle cx="15" cy="9" r="7.5" stroke="#252423" strokeWidth="1.6" />
            <path d="M10 15L1 23" stroke="#252423" strokeWidth="1.6" />
          </Svg>
          <input type="search" aria-label="Search" placeholder="Search" className="w-full min-w-0 bg-transparent pt-0.5 text-[18px] outline-none placeholder:text-[#3b3a39]" />
        </label>
      </div>
      <ul className="pt-[11px]">
        {fields.map((f) => (
          <li key={f.name}>
            <button className="flex h-[41px] w-full items-center pl-[5px] text-[17px] text-[#252423]">
              <span className="pt-1"><Chevron dir="down" /></span>
              <span className="flex w-[48px] pl-2.5 pt-1"><FieldIcon kind={f.kind} /></span>
              <span className={f.kind === 'checked' ? 'font-semibold' : ''}>{f.name}</span>
            </button>
          </li>
        ))}
      </ul>
    </aside>
  );
}

/* ---------- Windows taskbar ---------- */

const Chrome = () => (
  <>
    <circle cx="17" cy="17" r="16.5" fill="#f9c932" />
    <path d="M17 17L2.7 8.8A16.5 16.5 0 0 1 31.3 8.8H17Z" fill="#db4437" />
    <path d="M17 33.5L24 21L17 17L10 21L2.7 8.800A16.5 16.5 0 0 0 17 33.5Z" fill="#1da362" />
    <circle cx="17" cy="17" r="7.5" fill="#fff" />
    <circle cx="17" cy="17" r="6" fill="#4c8bf5" />
  </>
);

const apps: { name: string; line: string; art: ReactNode }[] = [
  { name: 'File Explorer', line: 'split', art: <><path d="M1 4H14L16 7H14V12H1Z" fill="#e0a106" /><path d="M1 8H13L16 6H33V28H1Z" fill="#fdd663" /><path d="M6 30V20Q6 18 8 18H25Q27 18 27 20V30H22V25H12V30Z" fill="#3a96dd" /></> },
  { name: 'Chrome', line: '', art: <Chrome /> },
  { name: 'Outlook', line: 'split', art: <><path d="M10 1H34V20H10Z" fill="#1066b5" /><path d="M18 6H26V14H18Z" fill="#32a9e7" /><path d="M26 6H34V14H26Z" fill="#58d9fd" /><path d="M8 17L35 17V33H8Z" fill="#1c8fe3" /><path d="M8 33L35 18V33Z" fill="#33b0f0" /><rect y="8" width="18" height="18" rx="1.5" fill="#0f6fca" /><ellipse cx="9" cy="17" rx="3.8" ry="4.5" stroke="#fff" strokeWidth="2.2" /></> },
  { name: 'Qlik Sense', line: '', art: <><circle cx="18" cy="16" r="16.5" fill="#d5d7d6" /><circle cx="18" cy="16" r="12" fill="#3fa22d" /><path d="M8 9A12 12 0 0 1 28 9L24 12H12Z" fill="#a9d3a1" /><path d="M25 22L31 27" stroke="#3fa22d" strokeWidth="4" /><circle cx="18" cy="16" r="7.5" fill="#d5d7d6" /><circle cx="18" cy="16" r="5" fill="#2d2d2d" /></> },
  { name: 'Remote apps', line: '', art: <><path d="M14 28L5 32V11L27 2V14" stroke="#fff" strokeWidth="2" /><path d="M15 20L29 14V18L15 24ZM15 26L21 23V31L15 33ZM23 22L29 20V28L23 31Z" fill="#fff" /></> },
  { name: 'Paint', line: 'full', art: <><path d="M4 19C5 8 16 3 25 5C35 8 35 21 29 27C24 32 15 32 15 30C14 27 18 26 14 25C10 23 5 28 4 22Z" fill="#b9dcf2" /><circle cx="8" cy="19" r="2.8" fill="#e0463c" /><circle cx="13" cy="13" r="2.8" fill="#57b947" /><circle cx="20" cy="10" r="3" fill="#f7a823" /><circle cx="16" cy="21" r="2" fill="#2a3b50" /><path d="M19 34L29 8" stroke="#c96a1b" strokeWidth="3" /><path d="M27 1L36 4L31 9L28 8Z" fill="#cfa87a" /></> },
  { name: 'Power BI Desktop', line: 'active', art: <><path d="M18 -1H31V35H18Z" fill="#d9930f" /><path d="M10 8H23V35H10Z" fill="#f2c437" /><path d="M3 17H15V35H3Z" fill="#f9e17a" /></> },
  { name: 'Notepad', line: 'full', art: <><path d="M27 4L33 5V29L27 31Z" fill="#b98a35" /><path d="M12 2H30L25 32L1 25Z" fill="#dbeef2" /><path d="M12 4L27 5L21 28L2 23Z" fill="#4fa8ba" /><path d="M13 4L27 5L24 18L8 15Z" fill="#a3d8e0" /><path d="M13 2H31" stroke="#777" strokeWidth="3" strokeDasharray="1.5 1" /></> },
  { name: 'Chrome profile', line: 'full', art: <><Chrome /><circle cx="26" cy="26" r="11.5" fill="#7c7f78" /><circle cx="26" cy="20" r="3.5" fill="#3d2c26" /><path d="M21 25L29 24L31 33L26 37L22 32Z" fill="#c3d0dc" /><path d="M23 31H29V36L24 37Z" fill="#263247" /></> },
  { name: 'Excel', line: 'full', art: <><rect x="8" y="1" width="27" height="32" rx="1.5" fill="#185c37" /><path d="M8 1H22V9H8Z" fill="#21a366" /><path d="M22 1H35V9H22Z" fill="#33c481" /><path d="M8 9H35V17H8Z" fill="#1fa463" /><path d="M8 17H35V25H8Z" fill="#107c41" /><rect y="8" width="18" height="18" rx="1.5" fill="#0f7b41" /><path d="M5 12L13 22M13 12L5 22" stroke="#fff" strokeWidth="2.5" /></> },
];

function AppUnderline({ line }: { line: string }) {
  if (line === 'split') {
    return (
      <span className="flex h-[3px] w-[50px]">
        <span className="w-9 bg-[#a9f1fb]" />
        <span className="flex-1 bg-[#8dc3cb]" />
      </span>
    );
  }
  if (line === 'full') return <span className="h-[3px] w-[50px] bg-[#a9f1fb]" />;
  if (line === 'active') return <span className="h-[3px] w-full bg-[#a9f1fb]" />;
  return <span className="h-[3px]" />;
}

const Cloud = () => (
  <Svg w={25} h={22}>
    <path d="M6 7C9 0 18 0 20 7Z" fill="#0f63b5" />
    <path d="M0 13C0 6 8 4 11 8L21 7V18H5C2 18 0 16 0 13Z" fill="#1681db" />
    <path d="M3 17L13 11L22 18H5Z" fill="#33a7ee" />
    <circle cx="18" cy="16" r="7" fill="#7f7f7f" />
    <path d="M16 12V20M20 12V20" stroke="#fff" strokeWidth="1.6" />
  </Svg>
);

function Taskbar() {
  return (
    <footer className="flex h-[60px] items-stretch bg-[linear-gradient(90deg,#243b40_0%,#27403f_4%,#30453e_32%,#27304f_36%,#283950_48%,#293950_66%,#262f57_71%,#2a3f4b_81%,#2b2c5a_86%,#2d1f61_90%,#2a1f58_100%)] text-white">
      <button aria-label="Start" className="flex w-[72px] shrink-0 items-center justify-center">
        <Svg w={24} h={24}>
          <path d="M0 3L10 2V11H0ZM11 2L24 0V11H11ZM0 12H10V22L0 21ZM11 12H24V24L11 22Z" fill="#fff" />
        </Svg>
      </button>
      <label className="flex w-[516px] shrink-0 items-center gap-4 border-2 border-[#c4c4c4] bg-[#f2f2f2] pl-4">
        <Svg w={26} h={26}>
          <circle cx="16" cy="9" r="8" stroke="#111" strokeWidth="1.8" />
          <path d="M11 15L1 25" stroke="#111" strokeWidth="1.8" />
        </Svg>
        <input type="search" aria-label="Type here to search" placeholder="Type here to search" className="w-full min-w-0 bg-transparent pt-1 text-[21px] outline-none placeholder:text-[#2b2b2b]" />
      </label>
      <button aria-label="Cortana" className="flex w-[72px] shrink-0 items-center justify-center">
        <span className="h-6 w-6 rounded-full border-[3px] border-white" />
      </button>
      <button aria-label="Task View" className="mr-1.5 flex w-[72px] shrink-0 items-center justify-center">
        <Svg w={24} h={24}>
          <path d="M1 0V4H16V0M1 7H16V17H1ZM1 24V20H16V24M23 0V6M23 12V24" stroke="#fff" strokeWidth="1.4" />
          <path d="M21 7h3v3h-3z" fill="#fff" />
        </Svg>
      </button>

      {apps.map((app) => (
        <button key={app.name} aria-label={app.name} className={`flex w-[63px] shrink-0 flex-col items-center justify-between pt-3 ${app.line === 'active' ? 'border-r-4 border-[#46525f] bg-[#53606f]' : ''}`}>
          <Svg w={35} h={35}>{app.art}</Svg>
          <AppUnderline line={app.line} />
        </button>
      ))}

      <div className="ml-auto flex items-center">
        <button aria-label="Show hidden icons" className="flex w-12 justify-center"><Chevron dir="up" w={18} h={11} color="#fff" /></button>
        <button aria-label="OneDrive" className="flex w-12 justify-center"><Cloud /></button>
        <button aria-label="OneDrive business" className="flex w-12 justify-center"><Cloud /></button>
        <button aria-label="Volume" className="flex w-12 justify-center">
          <Svg w={24} h={20}>
            <path d="M1 6H5L10 1V19L5 14H1ZM13 7Q15 10 13 13M16 4Q20 10 16 16M19 1Q25 10 19 19" stroke="#fff" strokeWidth="1.4" />
          </Svg>
        </button>
        <button aria-label="Dropbox" className="flex w-12 justify-center">
          <Svg w={24} h={22}>
            <path d="M6 0L12 4L6 8L0 4ZM18 0L24 4L18 8L12 4ZM6 8L12 12L6 16L0 12ZM18 8L24 12L18 16L12 12ZM12 14L18 18L12 22L6 18Z" fill="#fff" />
          </Svg>
        </button>
        <button aria-label="Windows Ink" className="flex w-[60px] justify-center">
          <Svg w={22} h={22}>
            <path d="M8 20L7 15L15 1L19 3L11 18ZM8 13C1 12 -1 21 4 20S13 11 18 8S22 11 17 12" stroke="#fff" strokeWidth="1.4" />
          </Svg>
        </button>
        <button className="w-[54px] text-[17px]">ENG</button>
        <button className="flex w-[116px] flex-col text-center text-[17px] leading-[29px]">
          <time>06:52</time>
          <time>19/11/2020</time>
        </button>
        <button aria-label="1 new notification" className="flex w-[71px] pl-[17px] pt-2">
          <Svg w={36} h={36}>
            <path d="M0 0H25V19H14V25L7 19H0Z" fill="#fff" />
            <path d="M5 6H20M5 10H20M5 14H15" stroke="#2d1f61" strokeWidth="1.4" />
            <circle cx="24" cy="25" r="11.5" fill="#2d2b3d" stroke="#8d8a9b" />
            <text x="24" y="31" textAnchor="middle" fontSize="16" fontWeight="700" fill="#fff">1</text>
          </Svg>
        </button>
        <span className="mr-[5px] h-[60px] w-0.5 bg-[#77718f]" />
      </div>
    </footer>
  );
}

export default function App() {
  return (
    <div className="flex min-h-screen w-full flex-col bg-[#f3f2f1] font-['Open_Sans','Noto_Sans',sans-serif]">
      <TitleBar />
      <Ribbon />
      <div className="flex flex-1">
        <ViewRail />
        <Report />
        <FiltersPane />
        <VisualizationsPane />
        <FieldsPane />
      </div>
      <div className="flex h-9 items-center border-t-2 border-[#e1dfdd] pl-[7px] text-[17px] text-[#484644]">Page 5 of 11</div>
      <Taskbar />
    </div>
  );
}
